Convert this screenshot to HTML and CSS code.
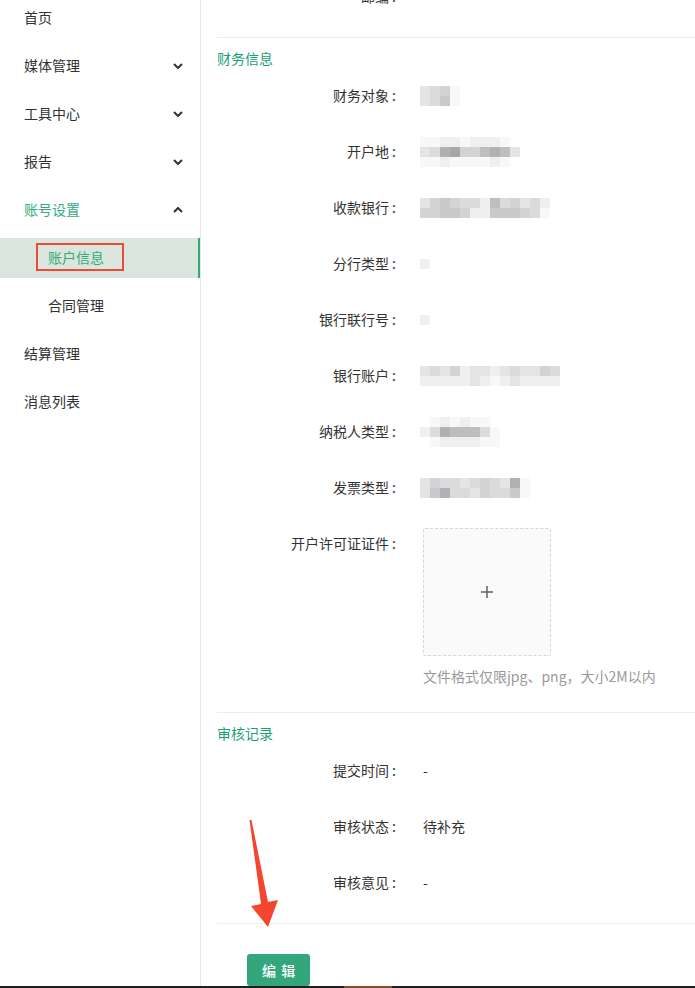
FILE: index.html
```html
<!DOCTYPE html>
<html lang="zh-CN">
<head>
<meta charset="utf-8">
<title>账户信息</title>
<link rel="stylesheet" href="styles.css">
</head>
<body>
<div class="page">
  <div class="top">
    <aside class="sidebar">
      <ul class="menu">
        <li class="item">首页</li>
        <li class="item">媒体管理<svg class="chev" viewBox="0 0 10 6"><polyline points="1,1 5,5 9,1"/></svg></li>
        <li class="item">工具中心<svg class="chev" viewBox="0 0 10 6"><polyline points="1,1 5,5 9,1"/></svg></li>
        <li class="item">报告<svg class="chev" viewBox="0 0 10 6"><polyline points="1,1 5,5 9,1"/></svg></li>
        <li class="item open">账号设置<svg class="chev" viewBox="0 0 10 6"><polyline points="1,5 5,1 9,5"/></svg></li>
        <li class="item sub active">账户信息<span class="mark"></span></li>
        <li class="item sub">合同管理</li>
        <li class="item">结算管理</li>
        <li class="item">消息列表</li>
      </ul>
    </aside>
    <main class="main">
      <div class="group">
        <div class="row"><div class="label">邮编<span class="colon">:</span></div><div class="value"></div></div>
      </div>
      <section class="section">
        <h3 class="title">财务信息</h3>
        <div class="row"><div class="label">财务对象<span class="colon">:</span></div>
          <div class="value"><div class="mosaic c4">
            <i class="s3"></i><i class="s4"></i><i class="s5"></i><i class="s1"></i>
            <i class="s3"></i><i class="s4"></i><i class="s6"></i><i class="s1"></i>
          </div></div></div>
        <div class="row"><div class="label">开户地<span class="colon">:</span></div>
          <div class="value"><div class="mosaic c10">
            <i class="s1"></i><i class="s1"></i><i class="s2"></i><i class="s2"></i><i class="s1"></i><i class="s2"></i><i class="s2"></i><i class="s2"></i><i class="s1"></i><i></i>
            <i class="s3"></i><i class="s4"></i><i class="s8"></i><i class="s9"></i><i class="s5"></i><i class="s5"></i><i class="s7"></i><i class="s8"></i><i class="s7"></i><i class="s3"></i>
            <i class="s1"></i><i class="s1"></i><i class="s2"></i><i class="s1"></i><i class="s1"></i><i class="s1"></i><i class="s1"></i><i class="s2"></i><i class="s1"></i><i></i>
          </div></div></div>
        <div class="row"><div class="label">收款银行<span class="colon">:</span></div>
          <div class="value"><div class="mosaic c13">
            <i class="s3"></i><i class="s5"></i><i class="s6"></i><i class="s5"></i><i class="s4"></i><i class="s4"></i><i class="s2"></i><i class="s7"></i><i class="s4"></i><i class="s5"></i><i class="s3"></i><i class="s4"></i><i class="s2"></i>
            <i class="s5"></i><i class="s5"></i><i class="s6"></i><i class="s6"></i><i class="s5"></i><i class="s2"></i><i class="s2"></i><i class="s6"></i><i class="s6"></i><i class="s6"></i><i class="s5"></i><i class="s4"></i><i class="s1"></i>
          </div></div></div>
        <div class="row"><div class="label">分行类型<span class="colon">:</span></div>
          <div class="value"><div class="mosaic c1"><i class="s2"></i></div></div></div>
        <div class="row"><div class="label">银行联行号<span class="colon">:</span></div>
          <div class="value"><div class="mosaic c1"><i class="s2"></i></div></div></div>
        <div class="row"><div class="label">银行账户<span class="colon">:</span></div>
          <div class="value"><div class="mosaic c14">
            <i class="s3"></i><i class="s4"></i><i class="s3"></i><i class="s5"></i><i class="s2"></i><i class="s3"></i><i class="s3"></i><i class="s2"></i><i class="s3"></i><i class="s4"></i><i class="s3"></i><i class="s3"></i><i class="s5"></i><i class="s4"></i>
            <i class="s2"></i><i class="s2"></i><i class="s2"></i><i class="s2"></i><i class="s2"></i><i class="s3"></i><i class="s2"></i><i class="s1"></i><i class="s2"></i><i class="s3"></i><i class="s2"></i><i class="s2"></i><i class="s2"></i><i class="s2"></i>
          </div></div></div>
        <div class="row"><div class="label">纳税人类型<span class="colon">:</span></div>
          <div class="value"><div class="mosaic c8">
            <i></i><i class="s1"></i><i class="s2"></i><i class="s1"></i><i class="s2"></i><i class="s1"></i><i class="s1"></i><i></i>
            <i class="s2"></i><i class="s4"></i><i class="s8"></i><i class="s7"></i><i class="s7"></i><i class="s7"></i><i class="s4"></i><i class="s1"></i>
            <i></i><i class="s1"></i><i class="s2"></i><i class="s2"></i><i class="s2"></i><i class="s2"></i><i class="s1"></i><i class="s1"></i>
          </div></div></div>
        <div class="row"><div class="label">发票类型<span class="colon">:</span></div>
          <div class="value"><div class="mosaic c11">
            <i class="s3"></i><i class="s5"></i><i class="s4"></i><i class="s4"></i><i class="s3"></i><i class="s4"></i><i class="s5"></i><i class="s4"></i><i class="s3"></i><i class="s8"></i><i class="s1"></i>
            <i class="s3"></i><i class="s6"></i><i class="s8"></i><i class="s4"></i><i class="s4"></i><i class="s3"></i><i class="s5"></i><i class="s4"></i><i class="s4"></i><i class="s6"></i><i class="s1"></i>
          </div></div></div>
        <div class="row upload-row"><div class="label">开户许可证证件<span class="colon">:</span></div>
          <div class="value">
            <div class="uploader">
              <svg class="plus" viewBox="0 0 12 12"><line x1="6" y1="0" x2="6" y2="12"/><line x1="0" y1="6" x2="12" y2="6"/></svg>
            </div>
            <div class="tip">文件格式仅限jpg、png，大小2M以内</div>
          </div>
        </div>
      </section>
      <section class="section">
        <h3 class="title">审核记录</h3>
        <div class="row"><div class="label">提交时间<span class="colon">:</span></div><div class="value text">-</div></div>
        <div class="row"><div class="label">审核状态<span class="colon">:</span></div><div class="value text">待补充</div></div>
        <div class="row"><div class="label">审核意见<span class="colon">:</span></div><div class="value text">-</div></div>
      </section>
      <div class="actions">
        <button class="btn">编 辑</button>
      </div>
    </main>
    <svg class="annotation" viewBox="0 0 695 986" width="695" height="986">
      <polygon points="249.5,820 251.5,820 268,902 278,900 268,927 251,906 261,904"/>
    </svg>
  </div>
  <div class="bottom-bar"><span class="seg"></span></div>
</div>
</body>
</html>
```

FILE: styles.css
```css
* { box-sizing: border-box; }
html, body { margin: 0; padding: 0; }
body {
  width: 695px;
  height: 988px;
  overflow: hidden;
  background: #fff;
  font-family: "Noto Sans CJK SC", "Noto Sans", sans-serif;
  font-size: 14px;
  color: #303133;
}
.page {
  display: flex;
  flex-direction: column;
  height: 988px;
}
.top {
  position: relative;
  flex: 1;
  display: flex;
  overflow: hidden;
}
.sidebar {
  width: 201px;
  flex: none;
  border-right: 1px solid #e4e4e4;
  overflow: hidden;
}
.menu {
  list-style: none;
  margin: -2px 0 0;
  padding: 0;
}
.item {
  position: relative;
  display: flex;
  align-items: center;
  justify-content: space-between;
  height: 40px;
  line-height: 38px;
  padding: 0 17px 2px 24px;
  margin-bottom: 8px;
  color: #303133;
}
.item.sub { padding-left: 48px; }
.item.open { color: #35a97c; }
.item.active {
  background: #d8e6dd;
  color: #35a97c;
  border-right: 2px solid #34a87b;
}
.chev {
  width: 10px;
  height: 6px;
  fill: none;
  stroke: #303133;
  stroke-width: 2;
  margin-top: 2px;
}
.mark {
  position: absolute;
  left: 36px;
  top: 5px;
  width: 88px;
  height: 28px;
  border: 2px solid #ee4a33;
}
.main {
  flex: 1;
  margin-top: -23px;
  padding-left: 16px;
  min-width: 0;
}
.group { padding-bottom: 4px; }
.section {
  border-top: 1px solid #ebebeb;
  padding: 10px 0 4px;
}
.title {
  margin: 0 0 8px;
  font-size: 14px;
  font-weight: normal;
  line-height: 20px;
  color: #1a9f78;
}
.row {
  display: flex;
  align-items: center;
  min-height: 40px;
  margin-bottom: 16px;
}
.row.upload-row { align-items: flex-start; }
.label {
  width: 191px;
  flex: none;
  padding-right: 12px;
  padding-bottom: 2px;
  text-align: right;
  line-height: 38px;
  height: 40px;
  color: #333;
}
.colon { margin-left: 3px; }
.value {
  margin-left: 15px;
  color: #333;
}
.value.text {
  line-height: 38px;
  padding-bottom: 2px;
}
.mosaic {
  display: grid;
  grid-auto-rows: 10px;
  margin-left: -3px;
}
.mosaic.c1 { grid-template-columns: repeat(1, 10px); }
.mosaic.c4 { grid-template-columns: repeat(4, 10px); }
.mosaic.c8 { grid-template-columns: repeat(8, 10px); }
.mosaic.c10 { grid-template-columns: repeat(10, 10px); }
.mosaic.c11 { grid-template-columns: repeat(11, 10px); }
.mosaic.c13 { grid-template-columns: repeat(13, 10px); }
.mosaic.c14 { grid-template-columns: repeat(14, 10px); }
.mosaic i { display: block; width: 10px; height: 10px; }
.s1 { background: #f8f8f9; }
.s2 { background: #efeff0; }
.s3 { background: #e5e4e4; }
.s4 { background: #dbdbdb; }
.s5 { background: #d3d3d5; }
.s6 { background: #c9c9cb; }
.s7 { background: #bebdbf; }
.s8 { background: #b1b1b5; }
.s9 { background: #a8a7a5; }
.uploader {
  margin-top: 4px;
  width: 128px;
  height: 128px;
  border: 1px dashed #d6d6d6;
  border-radius: 2px;
  background: #fafafa;
  display: flex;
  align-items: center;
  justify-content: center;
}
.plus {
  width: 12px;
  height: 12px;
  stroke: #6a6a6a;
  stroke-width: 1.6;
}
.tip {
  margin-top: 10px;
  line-height: 20px;
  padding-bottom: 6px;
  color: #999;
}
.actions {
  border-top: 1px solid #ebebeb;
  padding: 30px 0 0 30px;
}
.btn {
  height: 32px;
  padding: 0 14px 0 15px;
  border: none;
  border-radius: 3px;
  background: #33a77b;
  color: #fff;
  font-family: inherit;
  font-size: 14px;
  font-weight: 500;
  letter-spacing: 1px;
  line-height: 32px;
  display: block;
}
.annotation {
  position: absolute;
  left: 0;
  top: 0;
  pointer-events: none;
  fill: #f4452e;
}
.bottom-bar {
  height: 2px;
  flex: none;
  background: #1e1e1e;
  position: relative;
}
.seg {
  display: block;
  margin-left: 344px;
  width: 48px;
  height: 2px;
  background: #8a4a22;
}
```
